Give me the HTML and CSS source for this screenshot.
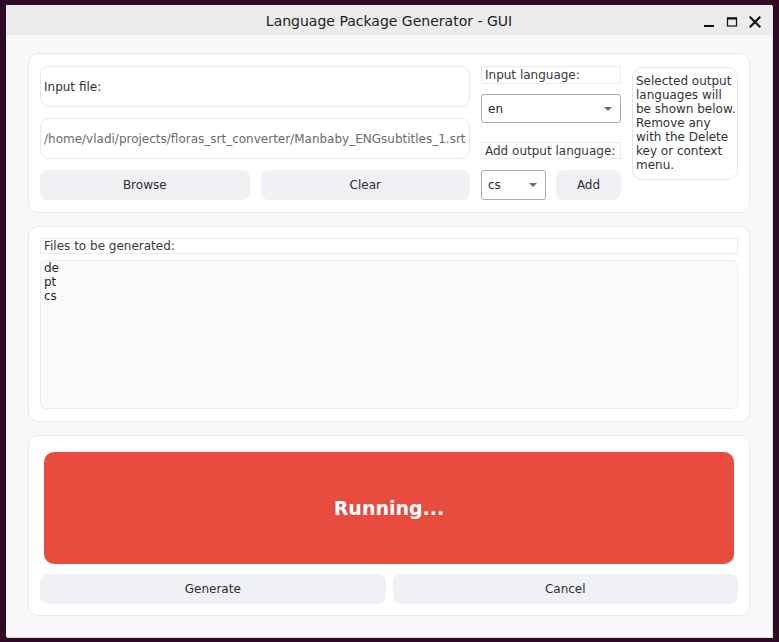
FILE: index.html
```html
<!DOCTYPE html>
<html>
<head>
<meta charset="utf-8">
<link rel="stylesheet" href="styles.css">
</head>
<body>
<div class="window">
  <div class="titlebar">
    <div class="title">Language Package Generator - GUI</div>
    <div class="controls">
      <svg class="ctl" width="12" height="12" viewBox="0 0 12 12"><rect x="1" y="9" width="10" height="2" fill="#111"/></svg>
      <svg class="ctl" width="12" height="12" viewBox="0 0 12 12"><rect x="1.5" y="2" width="9" height="8" fill="none" stroke="#111" stroke-width="1.2"/><rect x="1" y="1.5" width="10" height="2" fill="#111"/></svg>
      <svg class="ctl" width="12" height="12" viewBox="0 0 12 12"><path d="M1.5 1.5 L10.5 10.5 M10.5 1.5 L1.5 10.5" stroke="#111" stroke-width="2.2" stroke-linecap="square"/></svg>
    </div>
  </div>
  <div class="content">
    <div class="panel top">
      <div class="leftcol">
        <div class="field">Input file:</div>
        <div class="field path">/home/vladi/projects/floras_srt_converter/Manbaby_ENGsubtitles_1.srt</div>
        <div class="btnrow">
          <div class="btn">Browse</div>
          <div class="btn">Clear</div>
        </div>
      </div>
      <div class="midcol">
        <div class="label">Input language:</div>
        <div class="combo wide"><span>en</span><span class="arrow"></span></div>
        <div class="label second">Add output language:</div>
        <div class="addrow">
          <div class="combo small"><span>cs</span><span class="arrow"></span></div>
          <div class="btn add">Add</div>
        </div>
      </div>
      <div class="rightcol">
        <div class="info">Selected output<br>languages will<br>be shown below.<br>Remove any<br>with the Delete<br>key or context<br>menu.</div>
      </div>
    </div>
    <div class="panel files">
      <div class="label full">Files to be generated:</div>
      <div class="list">de<br>pt<br>cs</div>
    </div>
    <div class="panel run">
      <div class="running">Running...</div>
      <div class="btnrow gen">
        <div class="btn">Generate</div>
        <div class="btn">Cancel</div>
      </div>
    </div>
  </div>
</div>
</body>
</html>
```
FILE: styles.css
```css
html, body {
  margin: 0;
  padding: 0;
  height: 100%;
}
body {
  background: #2f0a25;
  font-family: "DejaVu Sans", sans-serif;
  color: #2e2e2e;
  font-size: 12px;
}
.window {
  margin: 5px 7px 0 6px;
  width: 766px;
  height: 632px;
  background: #f8f8fa;
  display: flex;
  flex-direction: column;
  box-shadow: 1px 1px 0 #dcdcdc;
}
.titlebar {
  height: 30px;
  background: #ececec;
  position: relative;
  display: flex;
  align-items: center;
  justify-content: center;
  flex: none;
}
.title {
  font-size: 14px;
  color: #222;
  padding-top: 1px;
}
.controls {
  position: absolute;
  right: 11px;
  top: 11px;
  display: flex;
  gap: 11px;
}
.ctl { display: block; }
.content {
  padding: 18px 22px 0 22px;
  display: flex;
  flex-direction: column;
}
.panel {
  background: #fff;
  border: 1px solid #e9e9ed;
  border-radius: 10px;
  box-sizing: border-box;
}
.panel.top {
  height: 160px;
  padding: 12px 11px;
  display: grid;
  grid-template-columns: 430px 140px 106px;
  column-gap: 11px;
}
.leftcol {
  display: flex;
  flex-direction: column;
}
.field {
  height: 41px;
  box-sizing: border-box;
  border: 1px solid #e8e8ec;
  border-radius: 9px;
  display: flex;
  align-items: center;
  padding-left: 3px;
  margin-bottom: 11px;
  white-space: nowrap;
  overflow: hidden;
}
.field.path { color: #6b6b6b; }
.btnrow {
  display: flex;
  gap: 11px;
}
.btn {
  flex: 1;
  height: 30px;
  background: #f0f1f4;
  border-radius: 8px;
  display: flex;
  align-items: center;
  justify-content: center;
  color: #2e2e2e;
}
.midcol {
  display: flex;
  flex-direction: column;
}
.label {
  height: 18px;
  box-sizing: border-box;
  border: 1px solid #ebebeb;
  padding-left: 3px;
  display: flex;
  align-items: center;
  color: #3a3a3a;
  white-space: nowrap;
}
.label.second {
  height: 17px;
  margin-top: 19px;
}
.combo {
  height: 29px;
  box-sizing: border-box;
  border: 1px solid #ababab;
  border-radius: 3px;
  margin-top: 10px;
  display: flex;
  align-items: center;
  justify-content: space-between;
  padding: 0 8px 0 6px;
  color: #2a2a2a;
}
.arrow {
  width: 0;
  height: 0;
  border-left: 4.5px solid transparent;
  border-right: 4.5px solid transparent;
  border-top: 4px solid #6a6a6a;
}
.addrow {
  display: flex;
  margin-top: 11px;
  gap: 10px;
}
.combo.small {
  width: 65px;
  height: 30px;
  margin-top: 0;
  flex: none;
}
.btn.add { flex: 1; }
.info {
  border: 1px solid #e6e6ea;
  border-radius: 10px;
  height: 113px;
  box-sizing: border-box;
  padding: 6px 0 0 3px;
  line-height: 14px;
  color: #333;
  margin-top: 1px;
  white-space: nowrap;
  overflow: hidden;
}
.panel.files {
  margin-top: 13px;
  height: 196px;
  padding: 11px 11px 12px 11px;
  display: flex;
  flex-direction: column;
}
.label.full { height: 16px; }
.list {
  margin-top: 6px;
  height: 150px;
  box-sizing: border-box;
  background: #fafafc;
  border: 1px solid #ebebef;
  border-radius: 6px;
  padding: 0 3px;
  line-height: 14px;
  color: #2a2a2a;
}
.panel.run {
  margin-top: 13px;
  height: 181px;
  padding: 16px 11px 11px 11px;
  display: flex;
  flex-direction: column;
}
.running {
  margin: 0 4px;
  height: 112px;
  background: #e74c3e;
  border-radius: 10px;
  color: #fff;
  font-weight: bold;
  font-size: 19px;
  display: flex;
  align-items: center;
  justify-content: center;
}
.btnrow.gen {
  margin-top: 10px;
  gap: 7px;
}
```
